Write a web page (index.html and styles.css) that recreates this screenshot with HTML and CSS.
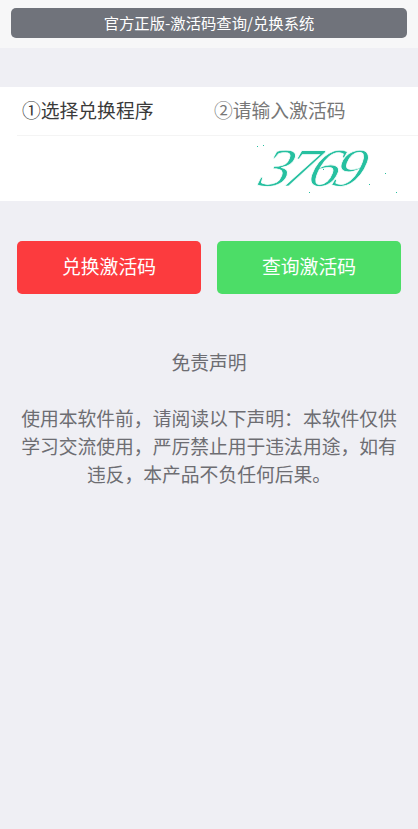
FILE: index.html
```html
<!DOCTYPE html>
<html lang="zh-CN">
<head>
    <meta charset="UTF-8">
    <meta name="viewport" content="width=device-width, initial-scale=1.0">
    <title>激活码查询</title>
    <link rel="stylesheet" href="styles.css">
</head>
<body>
    <header class="topbar">
        <h1 class="topbar-title">官方正版-激活码查询/兑换系统</h1>
    </header>

    <section class="form-card">
        <div class="form-row">
            <span class="step step-active">①选择兑换程序</span>
            <span class="step">②请输入激活码</span>
        </div>
        <div class="captcha-row">
            <svg class="captcha" width="160" height="65" viewBox="0 0 160 65">
                <text class="captcha-text" transform="translate(0 50) skewX(-20) scale(1.12 1)" x="15" y="0" textLength="92">3769</text>
                <g class="captcha-dots">
                    <rect x="17" y="10" width="1" height="1"/>
                    <rect x="23" y="9" width="1" height="1"/>
                    <rect x="83" y="33" width="1" height="1"/>
                    <rect x="145" y="37" width="1" height="1"/>
                    <rect x="129" y="48" width="1" height="1"/>
                    <rect x="69" y="56" width="1" height="1"/>
                    <rect x="156" y="56" width="1" height="1"/>
                </g>
            </svg>
        </div>
    </section>

    <div class="actions">
        <button class="btn btn-red">兑换激活码</button>
        <button class="btn btn-green">查询激活码</button>
    </div>

    <section class="notice">
        <p>免责声明</p>
        <p class="notice-body">使用本软件前，请阅读以下声明：本软件仅供学习交流使用，严厉禁止用于违法用途，如有违反，本产品不负任何后果。</p>
    </section>
</body>
</html>
```

FILE: styles.css
```css
body {
    font-family: "Noto Sans CJK SC", "Liberation Sans", sans-serif;
    background-color: #efeff4;
    color: #6d6d72;
    margin: 0;
    min-height: 829px;
}
.topbar {
    height: 48px;
    box-sizing: border-box;
    padding: 8px 11px 0;
    background-color: #f7f7f8;
}
.topbar-title {
    margin: 0;
    height: 30px;
    line-height: 28px;
    border-radius: 5px;
    background-color: #70737b;
    color: #fff;
    font-size: 15.33px;
    font-weight: normal;
    text-align: center;
}
.form-card {
    margin-top: 39px;
    background-color: #fff;
}
.form-row {
    display: flex;
    height: 48px;
    margin-left: 17px;
    padding-left: 5px;
    align-items: flex-start;
    line-height: 46px;
    border-bottom: 1px solid #f4f4f4;
    font-size: 18.8px;
}
.step {
    width: 192px;
    color: #777;
}
.step-active {
    color: #3a3a3a;
}
.captcha-row {
    display: flex;
    justify-content: flex-end;
    height: 65px;
}
.captcha {
    margin-right: 18px;
}
.captcha-text {
    font-family: "Liberation Serif", serif;
    font-style: italic;
    font-size: 54px;
    fill: #26c0a0;
    stroke: #fff;
    stroke-width: 0.7px;
}
.captcha-dots {
    fill: #26c0a0;
}
.actions {
    display: flex;
    gap: 16px;
    margin-top: 40px;
    padding: 0 17px;
}
.btn {
    flex: 1;
    height: 53px;
    padding: 0 0 4px;
    border: none;
    border-radius: 5px;
    color: #fff;
    font-family: inherit;
    font-size: 18.8px;
}
.btn-red {
    background-color: #fc3b3e;
}
.btn-green {
    background-color: #4cdd67;
}
.notice {
    margin-top: 54px;
    padding: 0 20px;
    font-size: 18.8px;
    line-height: 28px;
    text-align: center;
}
.notice p {
    margin: 0;
}
.notice .notice-body {
    margin-top: 28px;
}
```
